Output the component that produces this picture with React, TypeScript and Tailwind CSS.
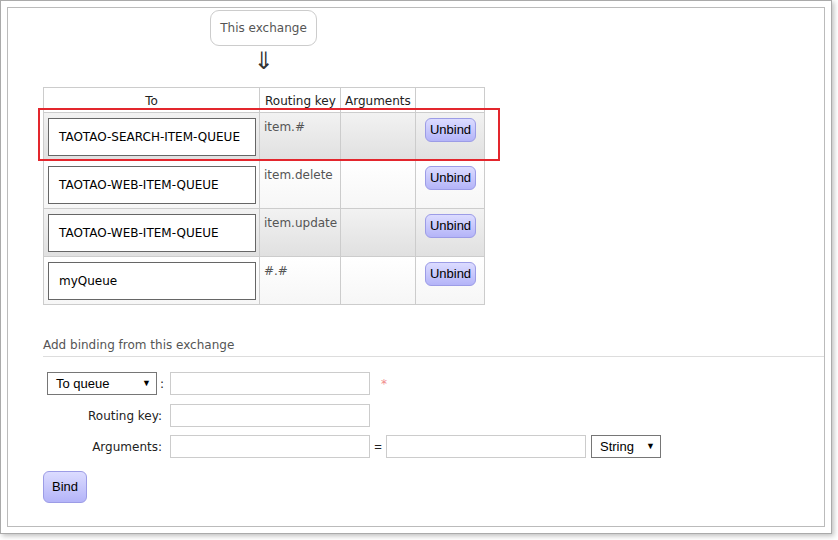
const bindings = [
  { to: 'TAOTAO-SEARCH-ITEM-QUEUE', key: 'item.#', shaded: true },
  { to: 'TAOTAO-WEB-ITEM-QUEUE', key: 'item.delete', shaded: false },
  { to: 'TAOTAO-WEB-ITEM-QUEUE', key: 'item.update', shaded: true },
  { to: 'myQueue', key: '#.#', shaded: false },
];

const verdana = "font-['DejaVu_Sans',Verdana,sans-serif]";
const arial = "font-['Liberation_Sans',Arial,sans-serif]";

function PurpleButton({ label, className }: { label: string; className: string }) {
  return (
    <button
      className={`${arial} text-[13px] text-black rounded-[6px] border border-[#9c9ce6] bg-gradient-to-b from-[#dcdcff] to-[#b4b4f8] ${className}`}
    >
      {label}
    </button>
  );
}

function Select({ label, width }: { label: string; width: string }) {
  return (
    <div
      className={`${arial} ${width} h-[23px] border border-[#767676] bg-white flex items-center justify-between pl-[8px] pr-[5px] text-[13px] text-black`}
    >
      <span>{label}</span>
      <span className="text-[9px] leading-none">▼</span>
    </div>
  );
}

export default function App() {
  return (
    <div className="bg-white w-[838px] h-[540px]">
      <div className="w-[832px] h-[534px] border border-[#aaaaaa] p-[6px] shadow-[2px_2px_5px_rgba(0,0,0,0.25)] bg-white">
        <div className={`${verdana} h-full border border-[#bbbbbb] pl-[35px] text-[12px]`}>
          <div className="w-[441px] flex flex-col items-center pt-[2px]">
            <div className="w-[107px] h-[36px] border border-[#cccccc] rounded-[9px] flex items-center justify-center text-[#555]">
              This exchange
            </div>
            <div className="h-[41px] flex items-start justify-center pt-[3px] text-[24px] leading-[24px] text-[#333]">
              ⇓
            </div>
          </div>

          <div className="relative w-[441px]">
            <table className="border-collapse w-[441px] table-fixed">
              <colgroup>
                <col className="w-[216px]" />
                <col className="w-[81px]" />
                <col className="w-[75px]" />
                <col className="w-[69px]" />
              </colgroup>
              <thead>
                <tr className="h-[25px] text-[#222]">
                  <th className="border border-[#cccccc] font-normal align-bottom pb-[2px] text-center">To</th>
                  <th className="border border-[#cccccc] font-normal align-bottom pb-[2px] text-left pl-[5px]">Routing key</th>
                  <th className="border border-[#cccccc] font-normal align-bottom pb-[2px] text-left pl-[4px]">Arguments</th>
                  <th className="border border-[#cccccc]"></th>
                </tr>
              </thead>
              <tbody>
                {bindings.map((b, i) => (
                  <tr
                    key={i}
                    className={`h-[48px] ${b.shaded ? 'bg-gradient-to-b from-[#f2f2f2] to-[#e0e0e0]' : 'bg-gradient-to-b from-white to-[#f6f6f6]'}`}
                  >
                    <td className="border border-[#cccccc] pl-[4px] pr-[3px] py-0 align-middle">
                      <div className="h-[38px] border border-[#666] bg-white flex items-center pl-[10px] pt-px text-black">
                        {b.to}
                      </div>
                    </td>
                    <td className="border border-[#cccccc] align-top pl-[4px] pt-[5px] text-[#555]">{b.key}</td>
                    <td className="border border-[#cccccc]"></td>
                    <td className="border border-[#cccccc] align-top pt-[5px] pl-[9px]">
                      <PurpleButton label="Unbind" className="w-[51px] h-[24px]" />
                    </td>
                  </tr>
                ))}
              </tbody>
            </table>
            <div className="absolute left-[-5px] top-[21px] w-[462px] h-[53px] border-2 border-[#e3262d]" />
          </div>

          <div className="mt-[33px] text-[#555] leading-[15px] pb-[3px] border-b border-[#dddddd]">
            Add binding from this exchange
          </div>

          <div className="mt-[15px] flex items-center h-[23px]">
            <div className="w-[127px] flex items-center pl-[4px]">
              <Select label="To queue" width="w-[110px]" />
              <span className="ml-[3px] text-[#222]">:</span>
            </div>
            <div className="w-[200px] h-[23px] border border-[#cccccc]" />
            <span className="ml-[11px] text-[#f08a8a] text-[12px]">*</span>
          </div>

          <div className="mt-[9px] flex items-center h-[23px]">
            <div className="w-[127px] text-right pr-[8px] text-[#222]">Routing key:</div>
            <div className="w-[200px] h-[23px] border border-[#cccccc]" />
          </div>

          <div className="mt-[8px] flex items-center h-[23px]">
            <div className="w-[127px] text-right pr-[8px] text-[#222]">Arguments:</div>
            <div className="w-[200px] h-[23px] border border-[#cccccc]" />
            <span className={`${arial} w-[16px] text-center text-[13px] text-[#222]`}>=</span>
            <div className="w-[200px] h-[23px] border border-[#cccccc]" />
            <div className="ml-[5px]">
              <Select label="String" width="w-[70px]" />
            </div>
          </div>

          <PurpleButton label="Bind" className="mt-[13px] w-[44px] h-[32px] block" />
        </div>
      </div>
    </div>
  );
}
